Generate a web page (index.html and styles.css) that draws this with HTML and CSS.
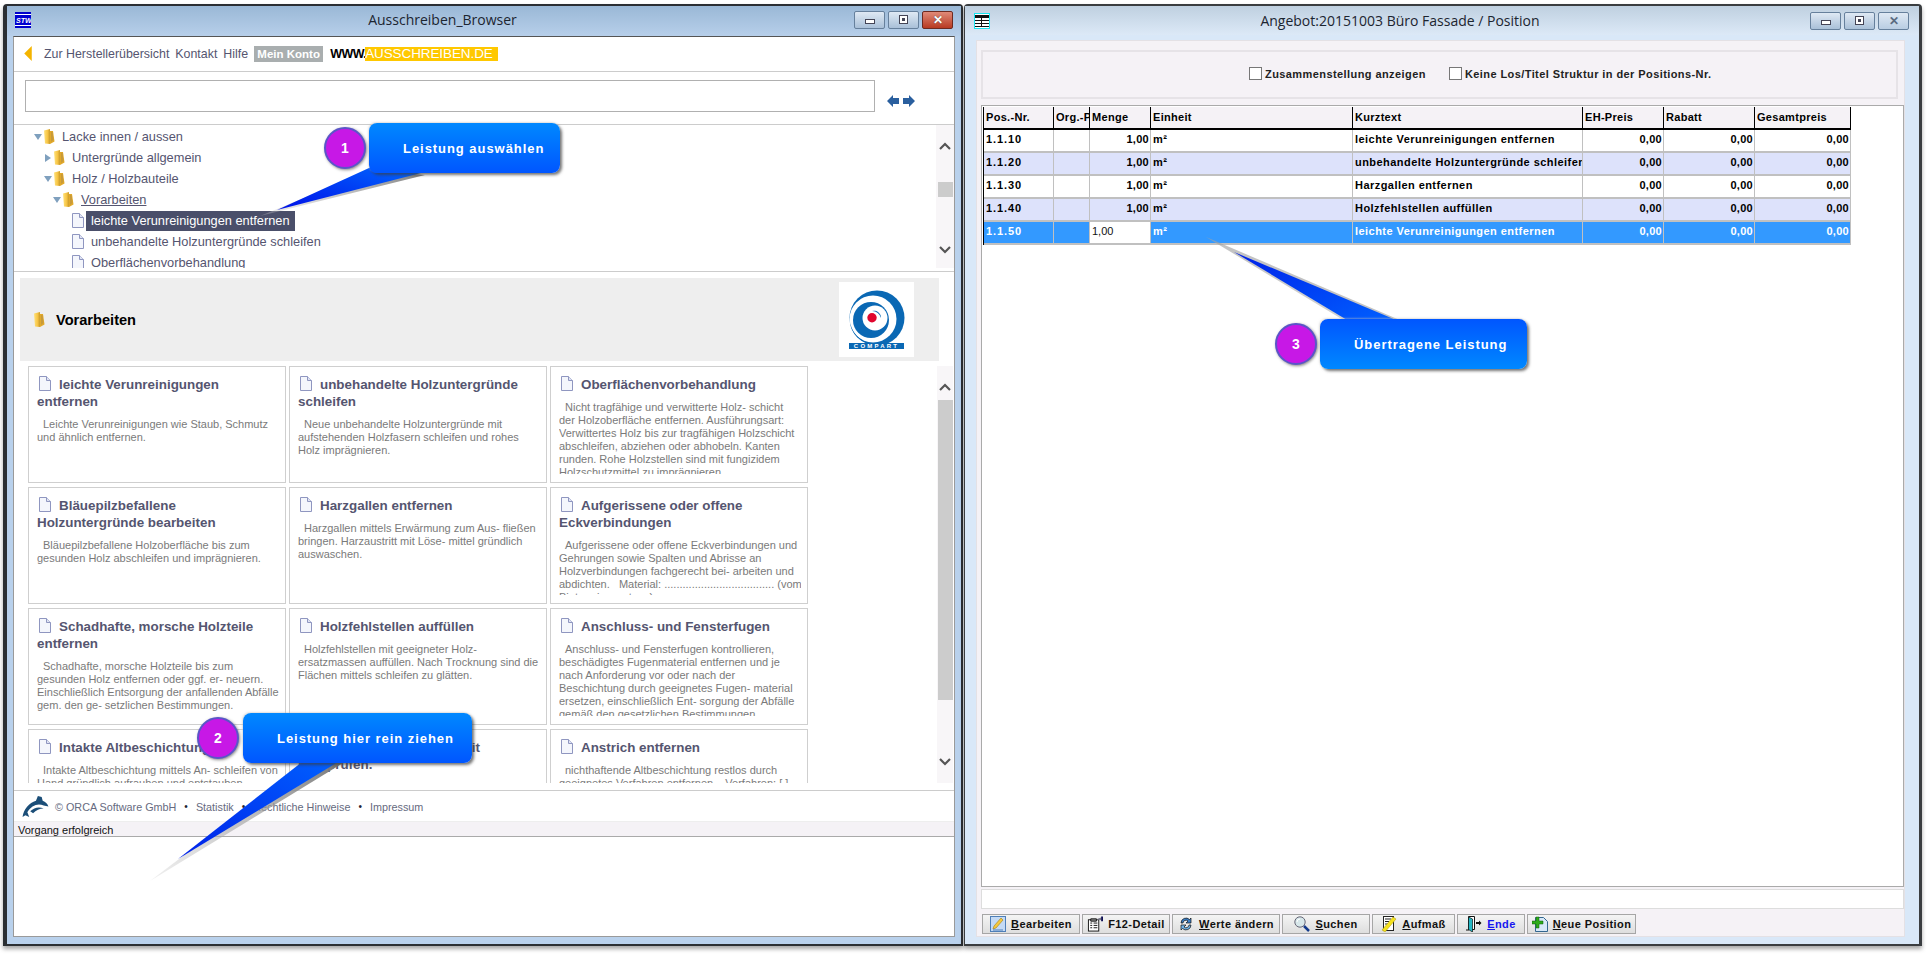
FILE: index.html
```html
<!DOCTYPE html>
<html lang="de">
<head>
<meta charset="utf-8">
<title>Ausschreiben</title>
<link rel="stylesheet" href="styles.css">
</head>
<body>
<svg class="defs" width="0" height="0" aria-hidden="true">
  <defs>
    <linearGradient id="fg" x1="0" x2="1" y1="0" y2="0"><stop offset="0" stop-color="#ffe27a"/><stop offset=".6" stop-color="#f6c445"/><stop offset="1" stop-color="#c99a2a"/></linearGradient>
    <linearGradient id="t1" x1="1" x2="0" y1="0" y2="1"><stop offset="0" stop-color="#0068ff"/><stop offset="1" stop-color="#0010e8"/></linearGradient>
    <linearGradient id="t2" x1="1" x2="0" y1="0" y2="1"><stop offset="0" stop-color="#0060ff"/><stop offset="1" stop-color="#0020e8"/></linearGradient>
    <linearGradient id="t3" x1="1" x2="0" y1="1" y2="0"><stop offset="0" stop-color="#0060ff"/><stop offset="1" stop-color="#0020e8"/></linearGradient>
    <linearGradient id="s1" x1="1" x2="0" y1="0" y2="1"><stop offset="0" stop-color="#777"/><stop offset="1" stop-color="#ccc" stop-opacity=".3"/></linearGradient>
    <symbol id="folder" viewBox="0 0 11 15"><path d="M0 1.500 6 0v15l-5-.5z" fill="url(#fg)"/><path d="M6 2h3l1.500 10.500L6 15z" fill="#e2a92a"/><path d="M7 3h1.500l1 8L7 13z" fill="#c79a3a"/></symbol>
    <symbol id="doc" viewBox="0 0 12 15"><path d="M.5.5h7l4 4v10H.5z" fill="#f4f6fc" stroke="#8f96c0"/><path d="M7.500.5v4h4" fill="#dfe3f3" stroke="#8f96c0"/></symbol>
  </defs>
</svg>

<div class="window window-left">
  <div class="titlebar">
    <svg class="app-icon" viewBox="0 0 16 16"><rect width="16" height="16" fill="#fff"/><rect x="0" y="0" width="16" height="2" fill="#00c"/><rect x="0" y="14" width="16" height="2" fill="#00c"/><rect x="0" y="3" width="16" height="10" fill="#0000d0"/><text x="1" y="11" class="app-icon-text">STW</text></svg>
    <div class="title">Ausschreiben_Browser</div>
    <div class="win-btns">
      <div class="win-btn"><span class="ico-min"></span></div>
      <div class="win-btn"><span class="ico-max"></span></div>
      <div class="win-btn win-close">✕</div>
    </div>
  </div>
  <div class="client">
    <div class="nav">
      <svg class="back" viewBox="0 0 8 16"><path d="M8 0v16L0 8z" fill="#f4b400"/></svg>
      <a class="nav-link">Zur Herstellerübersicht</a>
      <a class="nav-link">Kontakt</a>
      <a class="nav-link">Hilfe</a>
      <span class="konto">Mein Konto</span>
      <span class="www">WWW.</span><span class="brand">AUSSCHREIBEN.DE</span>
    </div>
    <div class="search-row">
      <div class="search-box"></div>
      <svg class="hist" viewBox="0 0 28 12"><path d="M0 6 6 0v3h6v6H6v3z" fill="#2a5f9e"/><path d="M28 6l-6-6v3h-6v6h6v3z" fill="#2a5f9e"/></svg>
    </div>
    <div class="tree-pane">
      <div class="tree">
        <div class="t-row l1"><span class="tw open"></span><svg class="t-folder"><use href="#folder"/></svg><span>Lacke innen / aussen</span></div>
        <div class="t-row l2"><span class="tw closed"></span><svg class="t-folder"><use href="#folder"/></svg><span>Untergründe allgemein</span></div>
        <div class="t-row l2"><span class="tw open"></span><svg class="t-folder"><use href="#folder"/></svg><span>Holz / Holzbauteile</span></div>
        <div class="t-row l3"><span class="tw open"></span><svg class="t-folder"><use href="#folder"/></svg><span class="u">Vorarbeiten</span></div>
        <div class="t-row l4"><svg class="t-doc"><use href="#doc"/></svg><span class="sel">leichte Verunreinigungen entfernen</span></div>
        <div class="t-row l4"><svg class="t-doc"><use href="#doc"/></svg><span class="leaf">unbehandelte Holzuntergründe schleifen</span></div>
        <div class="t-row l4"><svg class="t-doc"><use href="#doc"/></svg><span class="leaf">Oberflächenvorbehandlung</span></div>
      </div>
      <div class="tree-scroll">
        <svg class="chev" viewBox="0 0 12 8"><path d="M1 7l5-5 5 5" fill="none" stroke="#555" stroke-width="2.200"/></svg>
        <div class="tree-thumb"></div>
        <svg class="chev chev-end" viewBox="0 0 12 8"><path d="M1 1l5 5 5-5" fill="none" stroke="#555" stroke-width="2.200"/></svg>
      </div>
    </div>
    <div class="main">
      <div class="head-band">
        <svg class="band-folder"><use href="#folder"/></svg>
        <h1 class="band-title">Vorarbeiten</h1>
        <div class="logo">
          <svg viewBox="0 0 75 75" width="75" height="75">
            <circle cx="38" cy="36" r="27.500" fill="#0a68b4"/>
            <circle cx="34" cy="37" r="23.500" fill="#fff"/>
            <circle cx="32" cy="38" r="18" fill="#0a68b4"/>
            <circle cx="36" cy="36" r="12.500" fill="#fff"/>
            <path d="M11 40a27 27 0 0 0 22 22a24 24 0 0 1-22-22z" fill="#0a68b4"/>
            <circle cx="33" cy="35.700" r="4.700" fill="#e0062e"/>
            <path d="M33 29a7 7 0 0 1 9 7a9 9 0 0 0-9-7z" fill="#0a68b4"/>
            <rect x="10" y="61" width="55" height="6" fill="#0a68b4"/>
            <text x="37.500" y="66.200" class="logo-text">COMPART</text>
          </svg>
        </div>
      </div>
      <div class="cards-wrap">
        <div class="cards">
          <article class="card"><div class="card-clip"><h2 class="c-title"><svg class="c-doc"><use href="#doc"/></svg>leichte Verunreinigungen entfernen</h2><p class="c-body">Leichte Verunreinigungen wie Staub, Schmutz<br>und ähnlich entfernen.</p></div></article>
          <article class="card"><div class="card-clip"><h2 class="c-title"><svg class="c-doc"><use href="#doc"/></svg>unbehandelte Holzuntergründe schleifen</h2><p class="c-body">Neue unbehandelte Holzuntergründe mit<br>aufstehenden Holzfasern schleifen und rohes<br>Holz imprägnieren.</p></div></article>
          <article class="card"><div class="card-clip"><h2 class="c-title"><svg class="c-doc"><use href="#doc"/></svg>Oberflächenvorbehandlung</h2><p class="c-body">Nicht tragfähige und verwitterte Holz- schicht<br>der Holzoberfläche entfernen. Ausführungsart:<br>Verwittertes Holz bis zur tragfähigen Holzschicht<br>abschleifen, abziehen oder abhobeln. Kanten<br>runden. Rohe Holzstellen sind mit fungizidem<br>Holzschutzmittel zu imprägnieren.</p></div></article>
          <article class="card"><div class="card-clip"><h2 class="c-title"><svg class="c-doc"><use href="#doc"/></svg>Bläuepilzbefallene Holzuntergründe bearbeiten</h2><p class="c-body">Bläuepilzbefallene Holzoberfläche bis zum<br>gesunden Holz abschleifen und imprägnieren.</p></div></article>
          <article class="card"><div class="card-clip"><h2 class="c-title"><svg class="c-doc"><use href="#doc"/></svg>Harzgallen entfernen</h2><p class="c-body">Harzgallen mittels Erwärmung zum Aus- fließen<br>bringen. Harzaustritt mit Löse- mittel gründlich<br>auswaschen.</p></div></article>
          <article class="card"><div class="card-clip"><h2 class="c-title"><svg class="c-doc"><use href="#doc"/></svg>Aufgerissene oder offene Eckverbindungen</h2><p class="c-body">Aufgerissene oder offene Eckverbindungen und<br>Gehrungen sowie Spalten und Abrisse an<br>Holzverbindungen fachgerecht bei- arbeiten und<br>abdichten.&nbsp;&nbsp; Material: .................................... (vom<br>Bieter einzusetzen)</p></div></article>
          <article class="card"><div class="card-clip"><h2 class="c-title"><svg class="c-doc"><use href="#doc"/></svg>Schadhafte, morsche Holzteile entfernen</h2><p class="c-body">Schadhafte, morsche Holzteile bis zum<br>gesunden Holz entfernen oder ggf. er- neuern.<br>Einschließlich Entsorgung der anfallenden Abfälle<br>gem. den ge- setzlichen Bestimmungen.</p></div></article>
          <article class="card"><div class="card-clip"><h2 class="c-title"><svg class="c-doc"><use href="#doc"/></svg>Holzfehlstellen auffüllen</h2><p class="c-body">Holzfehlstellen mit geeigneter Holz-<br>ersatzmassen auffüllen. Nach Trocknung sind die<br>Flächen mittels schleifen zu glätten.</p></div></article>
          <article class="card"><div class="card-clip"><h2 class="c-title"><svg class="c-doc"><use href="#doc"/></svg>Anschluss- und Fensterfugen</h2><p class="c-body">Anschluss- und Fensterfugen kontrollieren,<br>beschädigtes Fugenmaterial entfernen und je<br>nach Anforderung vor oder nach der<br>Beschichtung durch geeignetes Fugen- material<br>ersetzen, einschließlich Ent- sorgung der Abfälle<br>gemäß den gesetzlichen Bestimmungen.</p></div></article>
          <article class="card"><div class="card-clip"><h2 class="c-title"><svg class="c-doc"><use href="#doc"/></svg>Intakte Altbeschichtung</h2><p class="c-body">Intakte Altbeschichtung mittels An- schleifen von<br>Hand gründlich aufrauhen und entstauben.</p></div></article>
          <article class="card"><div class="card-clip"><h2 class="c-title"><svg class="c-doc"><use href="#doc"/></svg>Altanstrich auf Festigkeit<br>überprüfen.</h2></div></article>
          <article class="card"><div class="card-clip"><h2 class="c-title"><svg class="c-doc"><use href="#doc"/></svg>Anstrich entfernen</h2><p class="c-body">nichthaftende Altbeschichtung restlos durch<br>geeignetes Verfahren entfernen.&nbsp;&nbsp; Verfahren: [ ]</p></div></article>
        </div>
        <div class="cards-scroll">
          <svg class="chev" viewBox="0 0 12 8"><path d="M1 7l5-5 5 5" fill="none" stroke="#555" stroke-width="2.200"/></svg>
          <div class="cards-thumb"></div>
          <svg class="chev chev-end" viewBox="0 0 12 8"><path d="M1 1l5 5 5-5" fill="none" stroke="#555" stroke-width="2.200"/></svg>
        </div>
      </div>
    </div>
    <div class="footer">
      <svg class="dolphin" viewBox="0 0 28 24"><path d="M1 23C2 15 8 8 15 6l2-5 4 1 1 4c3 1 5 3 6 6l-5-1C17 8 10 11 6 18l2 5-4-2z" fill="#1b4e78"/><path d="M9 17c4-4 9-5 14-3-4 0-8 2-11 5z" fill="#1b4e78"/></svg>
      <span>© ORCA Software GmbH</span><i class="dot">•</i><span>Statistik</span><i class="dot">•</i><span>Rechtliche Hinweise</span><i class="dot">•</i><span>Impressum</span>
    </div>
    <div class="status">Vorgang erfolgreich</div>
    <div class="log"></div>
  </div>
</div>

<div class="window window-right">
  <div class="titlebar">
    <svg class="app-icon" viewBox="0 0 16 16"><rect width="16" height="16" fill="#19e6f0"/><rect x="1" y="1" width="14" height="14" fill="#fff"/><path d="M1 2h14v3H1zM1 7h14v1H1zM1 10h14v1H1zM1 13h14v1H1zM7 5h1v9H7z" fill="#111"/></svg>
    <div class="title">Angebot:20151003 Büro Fassade / Position</div>
    <div class="win-btns">
      <div class="win-btn"><span class="ico-min"></span></div>
      <div class="win-btn"><span class="ico-max"></span></div>
      <div class="win-btn win-x">✕</div>
    </div>
  </div>
  <div class="panel">
    <div class="options">
      <label class="opt opt-a"><span class="cb"></span>Zusammenstellung anzeigen</label>
      <label class="opt"><span class="cb"></span>Keine Los/Titel Struktur in der Positions-Nr.</label>
    </div>
    <div class="grid-frame">
      <table class="grid">
        <colgroup><col class="w-pos"><col class="w-org"><col class="w-men"><col class="w-ein"><col class="w-kur"><col class="w-eh"><col class="w-rab"><col class="w-ges"></colgroup>
        <thead><tr><th>Pos.-Nr.</th><th>Org.-P</th><th>Menge</th><th>Einheit</th><th>Kurztext</th><th>EH-Preis</th><th>Rabatt</th><th>Gesamtpreis</th></tr></thead>
        <tbody>
          <tr><td class="spaced">1.1.10</td><td></td><td class="num">1,00</td><td>m²</td><td>leichte Verunreinigungen entfernen</td><td class="num">0,00</td><td class="num">0,00</td><td class="num">0,00</td></tr>
          <tr class="alt"><td class="spaced">1.1.20</td><td></td><td class="num">1,00</td><td>m²</td><td>unbehandelte Holzuntergründe schleifen</td><td class="num">0,00</td><td class="num">0,00</td><td class="num">0,00</td></tr>
          <tr><td class="spaced">1.1.30</td><td></td><td class="num">1,00</td><td>m²</td><td>Harzgallen entfernen</td><td class="num">0,00</td><td class="num">0,00</td><td class="num">0,00</td></tr>
          <tr class="alt"><td class="spaced">1.1.40</td><td></td><td class="num">1,00</td><td>m²</td><td>Holzfehlstellen auffüllen</td><td class="num">0,00</td><td class="num">0,00</td><td class="num">0,00</td></tr>
          <tr class="cur"><td class="spaced">1.1.50</td><td></td><td class="edit">1,00</td><td>m²</td><td>leichte Verunreinigungen entfernen</td><td class="num">0,00</td><td class="num">0,00</td><td class="num">0,00</td></tr>
        </tbody>
      </table>
    </div>
    <div class="sumbox"></div>
    <div class="toolbar">
      <button class="tb w-b1"><svg class="tb-ico" viewBox="0 0 16 16"><rect x=".5" y=".5" width="15" height="15" fill="#c4daf5" stroke="#4f7fb8"/><path d="M3 13l1-3 7-8 2 2-7 8z" fill="#f6c93c" stroke="#a37c12" stroke-width=".6"/><path d="M3 14h10" stroke="#4f7fb8"/></svg><span><u>B</u>earbeiten</span></button>
      <button class="tb w-b2"><svg class="tb-ico" viewBox="0 0 17 16"><rect x="1.500" y="3.500" width="11" height="12" fill="#fff" stroke="#111"/><path d="M4 2.500h6v2.500H4z" fill="#888" stroke="#111"/><path d="M3.500 7h2M7 7h4M3.500 9.500h2M7 9.500h4M3.500 12h2M7 12h4" stroke="#111"/><path d="M10 3l5-2v3z" fill="#778"/><path d="M15 0h2v5h-2z" fill="#115"/></svg><span>F12-Detail</span></button>
      <button class="tb w-b3"><svg class="tb-ico" viewBox="0 0 16 16"><path d="M3 7a5 5 0 0 1 8.500-3.500L13 2v5H8l2-2a3 3 0 0 0-5 2z" fill="#3a7fc8" stroke="#111" stroke-width=".7"/><path d="M13 9a5 5 0 0 1-8.500 3.500L3 14V9h5l-2 2a3 3 0 0 0 5-2z" fill="#6fb3e8" stroke="#111" stroke-width=".7"/></svg><span><u>W</u>erte ändern</span></button>
      <button class="tb w-b4"><svg class="tb-ico" viewBox="0 0 16 16"><circle cx="6" cy="6" r="5.200" fill="#d7e7ea" stroke="#667"/><path d="M3 6a3 3 0 0 1 3-3" stroke="#fff" fill="none"/><path d="M10 10l5 5" stroke="#123a8c" stroke-width="2.500"/></svg><span><u>S</u>uchen</span></button>
      <button class="tb w-b5"><svg class="tb-ico" viewBox="0 0 16 16"><rect x="2.500" y=".5" width="10" height="14" fill="#fff" stroke="#222"/><path d="M4 3h6M4 5.500h4M4 8h3" stroke="#222"/><path d="M1 14L12 1l3 2L4 16z" fill="#f5e21e" stroke="#a8961a" stroke-width=".5"/></svg><span><u>A</u>ufmaß</span></button>
      <button class="tb w-b6"><svg class="tb-ico" viewBox="0 0 16 16"><path d="M2.500 .5h6v13h-6z" fill="#fff" stroke="#111"/><path d="M2.500 1l4 2v13l-4-2.500z" fill="#24b7c4" stroke="#111" stroke-width=".7"/><path d="M10 6h3V4.500l2.500 2.500L13 9.500V8h-3z" fill="#111"/><path d="M0 14h3" stroke="#111"/></svg><span class="blue"><u>E</u>nde</span></button>
      <button class="tb w-b7"><svg class="tb-ico" viewBox="0 0 16 16"><path d="M3.500 1.500h8l4 4v10h-12z" fill="#d7e8f8" stroke="#33668f"/><path d="M4 1h3v4h4v3H7v4H4V8H0V5h4z" fill="#2eaa1a" stroke="#0d5e08" stroke-width=".5"/></svg><span><u>N</u>eue Position</span></button>
    </div>
  </div>
</div>

<svg class="tails" viewBox="0 0 1931 954" width="1931" height="954">
  <polygon points="372,170 425,175 260,216" fill="url(#s1)"/>
  <polygon points="369,168 421,173 277,210" fill="url(#t1)"/>
  <polygon points="306,763 343,763 150,881" fill="url(#s1)"/>
  <polygon points="302,762 338,762 178,859" fill="url(#t2)"/>
  <polygon points="1345,321 1402,321 1206,237" fill="url(#s1)"/>
  <polygon points="1347,320 1396,320 1234,252" fill="url(#t3)"/>
</svg>

<div class="callout c1"><span>Leistung auswählen</span></div>
<div class="badge b1">1</div>
<div class="callout c2"><span>Leistung hier rein ziehen</span></div>
<div class="badge b2">2</div>
<div class="callout c3"><span>Übertragene Leistung</span></div>
<div class="badge b3">3</div>
</body>
</html>
```
FILE: styles.css
```css
* { box-sizing: border-box; }
html, body { margin: 0; padding: 0; }
body {
  width: 1931px; height: 954px; overflow: hidden; position: relative;
  background: #fff; display: flex; padding: 4px 0 0 3px; gap: 1px;
  font-family: "Liberation Sans", Arial, sans-serif; color: #000;
}
.defs { position: absolute; }

/* windows */
.window { height: 942px; display: flex; flex-direction: column; box-shadow: 0 3px 4px rgba(0,0,0,.35); }
.window-left {
  width: 960px; background: #b9d1ec;
  border: solid #2b2f33; border-width: 2px 2px 2px 4px;
  padding: 0 6px 7px 6px; border-radius: 4px 4px 0 0;
}
.window-right {
  width: 958px; background: #d9e8f8;
  border: solid #3a3d40; border-width: 2px 3px 2px 1px;
  padding: 0 14px 7px 11px; border-radius: 4px 4px 0 0;
}
.titlebar { height: 30px; display: flex; align-items: center; padding: 0 2px 3px 2px; flex: none; }
.window-left .titlebar { background: linear-gradient(#9ab8d6, #b7cfea); margin: 0 -6px; padding: 0 8px 3px 8px; }
.window-right .titlebar { background: linear-gradient(#bfd0e0, #dce9f7); margin: 0 -14px 5px -11px; padding: 0 10px 0 9px; height: 29px; }
.app-icon { width: 16px; height: 16px; flex: none; }
.app-icon-text { font: italic bold 7px "Liberation Sans", sans-serif; fill: #fff; }
.title { flex: 1; text-align: center; font: 14px "Open Sans", sans-serif; color: #1c2530; }
.win-btns { display: flex; gap: 3px; }
.win-btn {
  width: 31px; height: 18px; border: 1px solid #66809c; border-radius: 2px;
  background: linear-gradient(#dfe9f4, #a9c0d8); display: flex; align-items: center; justify-content: center;
  font-size: 12px; font-weight: bold; color: #4b5c70;
}
.win-close { background: linear-gradient(#e08a78, #b83a22); border-color: #6d2a20; color: #fff; text-shadow: 0 0 1px #333; }
.win-x { background: linear-gradient(#dfe9f4, #b9cde2); color: #5a6b80; }
.ico-min { width: 10px; height: 5px; border: 1px solid #445; background: #fff; margin-top: 3px; }
.ico-max { width: 9px; height: 9px; border: 1px solid #445; background: radial-gradient(#445 0 1.500px, #fff 2px); }

.client { height: 901px; background: #fff; border: 1px solid #9a9a9a; border-top-color: #555; display: flex; flex-direction: column; }

/* nav */
.nav { height: 35px; flex: none; border-bottom: 1px solid #ccc; display: flex; align-items: center; padding: 0 0 1px 10px; font-size: 12.400px; color: #555570; white-space: nowrap; }
.back { width: 8px; height: 15px; margin-right: 12px; flex: none; }
.nav-link { margin-right: 6px; }
.konto { background: #a9aeaf; color: #fff; font-weight: bold; font-size: 11.500px; height: 16px; line-height: 16px; width: 69px; flex: none; text-align: center; margin-right: 7px; }
.www { font-weight: bold; font-size: 12.500px; letter-spacing: -.5px; color: #000; width: 35px; flex: none; }
.brand { background: #ffc800; color: #fff; font-size: 13.500px; height: 14px; line-height: 14px; width: 133px; flex: none; letter-spacing: -.1px; overflow: hidden; }

/* search */
.search-row { height: 53px; flex: none; border-bottom: 1px solid #ccc; display: flex; align-items: center; padding-left: 11px; }
.search-box { width: 850px; height: 32px; border: 1px solid #b0b0b0; background: #fff; margin-bottom: 5px; }
.hist { width: 28px; height: 12px; margin-left: 12px; margin-top: 6px; }

/* tree */
.tree-pane { height: 147px; flex: none; border-bottom: 1px solid #ccc; display: flex; }
.tree { flex: 1; height: 143px; padding-top: 1px; overflow: hidden; font-size: 12.800px; color: #555570; }
.t-row { height: 21px; display: flex; align-items: center; }
.l1 { padding-left: 18px; }
.l2 { padding-left: 28px; }
.l3 { padding-left: 37px; }
.l4 { padding-left: 58px; }
.tw { width: 11px; flex: none; display: flex; justify-content: center; }
.tw.open::before { content: ""; border: solid transparent; border-width: 6px 4.500px 0; border-top-color: #7fa0be; }
.tw.closed::before { content: ""; border: solid transparent; border-width: 4.500px 0 4.500px 6px; border-left-color: #7fa0be; }
.t-folder { width: 11px; height: 15px; margin: 0 7px 0 1px; flex: none; }
.t-doc { width: 12px; height: 15px; flex: none; margin-right: 2px; }
.u { text-decoration: underline; }
.sel { background: #4a4f6a; color: #fff; height: 20px; line-height: 20px; width: 209px; padding-left: 5px; white-space: nowrap; }
.leaf { padding-left: 5px; white-space: nowrap; }
.tree-scroll { width: 18px; height: 143px; background: #f8f6f8; display: flex; flex-direction: column; align-items: center; padding-top: 17px; }
.chev { width: 12px; height: 8px; flex: none; }
.tree-thumb { width: 15px; height: 15px; background: #ccc; margin-top: 32px; flex: none; }
.chev-end { margin-top: auto; margin-bottom: 14px; }

/* main */
.main { height: 518px; flex: none; }
.head-band { margin: 6px 0 0 6px; width: 919px; height: 83px; background: #eee; display: flex; align-items: center; padding-left: 14px; }
.band-folder { width: 11px; height: 15px; margin-right: 11px; flex: none; }
.band-title { margin: 0; font-size: 14.600px; font-weight: bold; color: #000; flex: 1; }
.logo { width: 75px; height: 75px; background: #fff; margin-right: 25px; flex: none; }
.logo svg { display: block; }
.logo-text { font: bold 6px "Liberation Sans", sans-serif; letter-spacing: 2.200px; fill: #fff; text-anchor: middle; }
.cards-wrap { margin-top: 5px; height: 417px; display: flex; overflow: hidden; }
.cards { flex: 1; padding-left: 14px; display: grid; grid-template-columns: repeat(3, 258px); grid-auto-rows: 117px; gap: 4px 3px; align-content: start; }
.card { border: 1px solid #cfcfcf; padding: 9px 6px 8px 8px; background: #fff; height: 117px; }
.card-clip { height: 98px; overflow: hidden; }
.c-title { margin: 0 0 8px; font-size: 13.400px; line-height: 17px; font-weight: bold; color: #555570; }
.c-doc { width: 12px; height: 15px; margin: -5px 8px -1px 2px; vertical-align: middle; }
.c-body { margin: 0; font-size: 11px; line-height: 13px; color: #7a7a7a; text-indent: 6px; white-space: nowrap; }
.cards-scroll { width: 16px; margin-right: 1px; flex: none; background: #f8f6f8; display: flex; flex-direction: column; align-items: center; padding-top: 17px; height: 417px; }
.cards-thumb { width: 15px; height: 300px; background: #ccc; margin-top: 9px; flex: none; }
.cards-scroll .chev-end { margin-top: 58px; margin-bottom: 0; }

/* footer */
.footer { height: 32px; flex: none; border-top: 1px solid #ccc; border-bottom: 1px solid #eee; display: flex; align-items: center; padding: 1px 0 0 7px; font-size: 10.800px; color: #666a80; white-space: nowrap; }
.dolphin { width: 28px; height: 23px; margin-right: 6px; flex: none; }
.dot { font-style: normal; margin: 0 8px; color: #223; font-size: 10px; }
.status { height: 15px; flex: none; background: #f5f2f6; border-bottom: 1px solid #aaa; padding: 2px 0 0 4px; font: 11px/12px "Liberation Sans", sans-serif; color: #111; }
.log { flex: 1; background: #fff; }

/* right panel */
.panel { height: 897px; background: #f5f2f6; border: 1px solid #e4e1e5; padding: 9px 0 3px 4px; display: flex; flex-direction: column; }
.options { height: 49px; width: 917px; flex: none; border: 2px solid #e6e3e7; display: flex; align-items: center; padding: 0 0 2px 266px; font-size: 11px; font-weight: bold; letter-spacing: .42px; color: #222; }
.opt { display: flex; align-items: center; white-space: nowrap; }
.opt-a { margin-right: 23px; }
.cb { width: 13px; height: 13px; background: #fff; border: 1px solid #777; margin-right: 3px; }
.grid-frame { height: 782px; flex: none; margin-top: 6px; background: #fff; border: 1px solid #aaa; padding: 1px 0 0 1px; }
.grid { border-collapse: separate; border-spacing: 0; table-layout: fixed; width: 867px; border-left: 1px solid #000; font-size: 11px; font-weight: bold; }
.w-pos { width: 70px; } .w-org { width: 36px; } .w-men { width: 61px; } .w-ein { width: 202px; }
.w-kur { width: 230px; } .w-eh { width: 81px; } .w-rab { width: 91px; } .w-ges { width: 96px; }
.grid th { height: 23px; padding: 0 0 2px 2px; background: #f5f2f6; text-align: left; font-weight: bold; border-bottom: 2px solid #000; border-right: 1px solid #000; letter-spacing: .3px; overflow: hidden; white-space: nowrap; }
.grid td { height: 23px; padding: 0 1px 3px 2px; border-bottom: 2px solid #c0c0c0; border-right: 1px solid #c0c0c0; overflow: hidden; white-space: nowrap; letter-spacing: .45px; }
.grid td.spaced { letter-spacing: .9px; }
.grid td.num { text-align: right; letter-spacing: .3px; }
.alt td { background: #dde2fb; }
.cur td { background: #3399ff; color: #fff; }
.grid .cur td.edit { background: #fff; color: #111; font-weight: normal; letter-spacing: 0; }
.sumbox { height: 20px; flex: none; margin-top: 2px; background: #fff; border: 1px solid #ddd; }
.toolbar { display: flex; gap: 2px; margin: 5px 0 0 1px; flex: none; }
.tb {
  height: 20px; padding: 0; border: 1px solid #a6a6a6; background: linear-gradient(#f4f4f4, #dedede);
  display: flex; align-items: center; justify-content: center; font: bold 11px "Liberation Sans", sans-serif;
  letter-spacing: .4px; color: #111; white-space: nowrap;
}
.tb-ico { width: 16px; height: 16px; margin-right: 5px; flex: none; }
.blue { color: #1616f0; }
.w-b1 { width: 98px; } .w-b2 { width: 88px; } .w-b3 { width: 108px; } .w-b4 { width: 88px; }
.w-b5 { width: 83px; } .w-b6 { width: 68px; } .w-b7 { width: 109px; }

/* annotations */
.tails { position: absolute; left: 0; top: 0; pointer-events: none; }
.callout {
  position: absolute; height: 50px; border-radius: 8px; color: #fff; font-weight: bold; font-size: 13px; letter-spacing: .95px;
  display: flex; align-items: center; box-shadow: 2px 2px 3px rgba(60,60,60,.7), -1px -1px 2px rgba(200,200,200,.5);
  background: linear-gradient(#0088ff, #0056ff); white-space: nowrap;
}
.c1 { left: 369px; top: 123px; width: 191px; padding-left: 34px; }
.c2 { left: 243px; top: 713px; width: 229px; padding-left: 34px; }
.c3 { left: 1320px; top: 319px; width: 207px; padding-left: 34px; background: linear-gradient(#0056ff, #0088ff); }
.badge {
  position: absolute; width: 42px; height: 42px; border-radius: 50%; background: #c718e6; border: 2px solid #5a55c8;
  color: #fff; font-weight: bold; font-size: 14px; display: flex; align-items: center; justify-content: center;
  box-shadow: 1px 1px 3px rgba(60,60,60,.6);
}
.b1 { left: 324px; top: 127px; }
.b2 { left: 197px; top: 717px; }
.b3 { left: 1275px; top: 323px; }
```
